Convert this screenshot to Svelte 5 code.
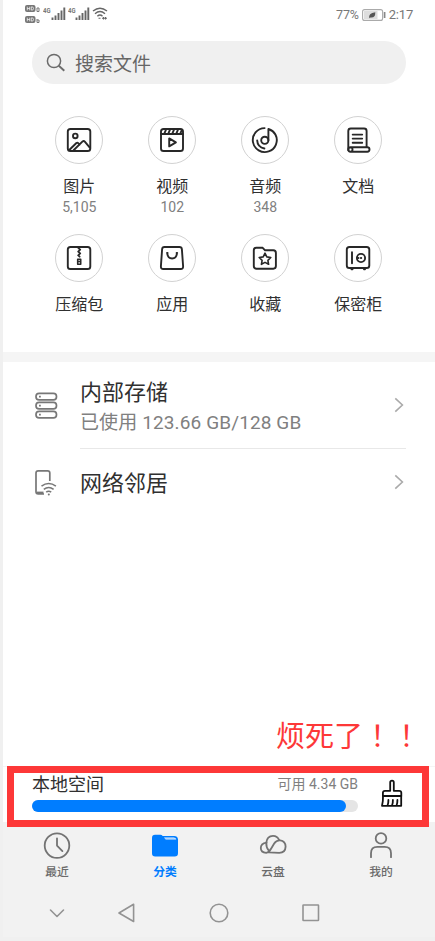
<script>
  // State
  let used = 96.2;

  const categories = [
    { icon: "image", name: "图片", count: "5,105" },
    { icon: "video", name: "视频", count: "102" },
    { icon: "audio", name: "音频", count: "348" },
    { icon: "doc", name: "文档" },
    { icon: "zip", name: "压缩包" },
    { icon: "app", name: "应用" },
    { icon: "star", name: "收藏" },
    { icon: "safe", name: "保密柜" }
  ];

  const tabs = [
    { icon: "recent", name: "最近" },
    { icon: "folder", name: "分类", active: true },
    { icon: "cloud", name: "云盘" },
    { icon: "me", name: "我的" }
  ];
</script>

<div class="screen">
  <header class="status">
    <div class="hd">
      <svg width="17" height="20" viewBox="0 0 17 20">
        <g fill="#777">
          <rect x="0" y="1" width="10.5" height="7" rx="2" />
          <rect x="0" y="12" width="10.5" height="7" rx="2" />
        </g>
        <g fill="none" stroke="#fff" stroke-width="0.7">
          <path d="M2.3 2.7v3.6M4.7 2.7v3.6M2.3 4.5h2.4M6.3 2.9h.8q1.4 0 1.4 1.6t-1.4 1.6h-.8z" />
          <path d="M2.3 13.7v3.6M4.7 13.7v3.6M2.3 15.5h2.4M6.3 13.9h.8q1.4 0 1.4 1.6t-1.4 1.6h-.8z" />
        </g>
        <g fill="none" stroke="#777" stroke-width="1">
          <path d="M12 4h2v3.5h-2zM12 15v3.5h2V16h-2" />
        </g>
      </svg>
    </div>
    {#each [0, 1] as sim}
      <div class="signal">
        <span>4G</span>
        <svg width="15" height="13" viewBox="0 0 15 13">
          <path d="M1.5 10.5V13M4.5 8.5V13M7.5 6V13M10.5 3.5V13M13.3 0.5V13" stroke="#666" stroke-width="1.9" />
        </svg>
      </div>
    {/each}
    <svg class="wifi" width="16" height="13" viewBox="0 0 16 13" fill="none" stroke="#666" stroke-width="1.4">
      <path d="M1 4Q8-1.5 15 4M3 6.7Q8 2.5 13 6.7M5.4 9.2Q8 6.8 10.5 9.2" />
      <path d="M6.5 11.3h2M10 11.3h5M11.5 10v2.5M13.5 10v2.5" stroke-width="1.1" />
    </svg>
    <div class="power">
      <span class="percent">77%</span>
      <svg width="24" height="12" viewBox="0 0 24 12">
        <rect x="0.6" y="0.6" width="20" height="10.8" rx="2" fill="#fff" stroke="#aaa" stroke-width="1.1" />
        <rect x="2" y="2" width="13.5" height="8" fill="#ddd" />
        <path d="M7.3 9.3Q6 4 13.3 3.2Q13.5 9 8.5 8.4Z" fill="#555" />
        <path d="M22.6 3v6" stroke="#888" stroke-width="1.7" />
      </svg>
      <span class="time">2:17</span>
    </div>
  </header>

  <div class="search">
    <svg width="20" height="20" viewBox="0 0 20 20" fill="none" stroke="#6b6b6b" stroke-width="1.5">
      <circle cx="8" cy="8" r="6.6" />
      <path d="M12.8 12.8l5.5 5" stroke-width="1.9" />
    </svg>
    <span>搜索文件</span>
  </div>

  <div class="categories">
    {#each categories as item}
      <div class="category">
        <div class="circle">
          <svg width="28" height="28" viewBox="0 0 28 28" fill="none" stroke="#282828" stroke-width="1.9" stroke-linejoin="round" stroke-linecap="round">
            {#if item.icon === "image"}
              <rect x="2.8" y="3" width="22.5" height="22" rx="2.6" />
              <circle cx="10.3" cy="9.9" r="2.3" />
              <path d="M4 24.2l7.4-7.2q1-.7 1.8.2l1.3 1.5M8.6 24.2l9-8.8q1.2-1 2.2.2l5 6" />
            {:else if item.icon === "video"}
              <rect x="3" y="3" width="22" height="22" rx="2.6" />
              <path d="M3 8h22M8 3.7L6.3 7.6M12 3.7l-1.7 3.9M16 3.7l-1.7 3.9M20 3.7l-1.7 3.9M23.8 4l-1.5 3.6M11.2 12.4v8l6.7-4z" />
            {:else if item.icon === "audio"}
              <path d="M13.6 2.1A12 12 0 1 0 24.4 8.5Q22.3 4.6 17.4 3V14.2" />
              <circle cx="13.8" cy="14.3" r="3.6" />
              <path d="M6.2 14.5q.3 6.7 7.2 8" />
            {:else if item.icon === "doc"}
              <path d="M4.3 24.2V5q0-2.5 2.5-2.5h13.3q2.5 0 2.5 2.5v16M8.7 8.6h9.5M8.7 12.6h9.5M8.7 16.8h9.5" />
              <path d="M6.5 21.2h16.7q2.3.1 2.3 2.2t-2.3 2.3H6.5q-2.2-.1-2.2-2.3t2.2-2.2q2 .1 2 2.3t-2 2.2" />
            {:else if item.icon === "zip"}
              <rect x="2.8" y="3" width="22.5" height="22" rx="2.6" />
              <path d="M13.2 3.8l2 1.8-2 2 2 1.8-2 2 1.4 1.3" stroke-width="1.8" />
              <path d="M12.7 15.2h3v5h-3zM12.8 17.5h2.8" stroke-width="1.6" />
            {:else if item.icon === "app"}
              <path d="M6.4 3h15q2.3 0 2.5 2.3l1.2 17q.1 2.7-2.4 2.7H5.3q-2.5 0-2.4-2.7l1.2-17Q4.3 3 6.4 3z" />
              <path d="M9.3 9.2q.3 5.3 4.8 5.3t4.8-5.3M9 9h.6M18.6 9h.6" />
            {:else if item.icon === "star"}
              <path d="M5.2 3.8h6.5l2.4 2.5h8.2q2.6 0 2.6 2.6v13.2q0 2.6-2.6 2.6H5.4q-2.6 0-2.6-2.6V6.3q0-2.5 2.4-2.5z" />
              <path d="M14 9.2l1.8 3.7 4 .6-2.9 2.8.7 4-3.6-1.9-3.6 1.9.7-4-2.9-2.8 4-.6z" stroke-width="1.6" />
            {:else}
              <rect x="2.8" y="3" width="22.5" height="21" rx="2.6" />
              <path d="M8 8.2v11M7.5 25.2h1M20 25.2h1" />
              <circle cx="17" cy="14" r="4.1" />
              <path d="M17 14h.1M14.2 14h.2" stroke-width="2.2" />
            {/if}
          </svg>
        </div>
        <span class="name">{item.name}</span>
        {#if item.count}
          <span class="count">{item.count}</span>
        {/if}
      </div>
    {/each}
  </div>

  <div class="band"></div>

  <div class="row storage">
    <svg width="26" height="30" viewBox="0 0 26 30" fill="none" stroke="#777" stroke-width="1.7">
      <rect x="4" y="2.3" width="20.5" height="6.6" rx="3.1" />
      <rect x="4" y="11.3" width="20.5" height="6.6" rx="3.1" />
      <rect x="4" y="20.3" width="20.5" height="6.6" rx="3.1" />
      <path d="M7 5.6h1.8M7 14.6h1.8M7 23.6h1.8" />
    </svg>
    <div class="info">
      <span class="title">内部存储</span>
      <span class="sub">已使用 123.66 GB/128 GB</span>
    </div>
    <svg class="arrow" width="10" height="16" viewBox="0 0 10 16"><path d="M1.3 1.3L8.4 8l-7.1 6.7" /></svg>
  </div>
  <div class="row network">
    <svg width="26" height="30" viewBox="0 0 26 30" fill="none" stroke="#777" stroke-width="1.7">
      <path d="M12 26H6.2Q4 26 4 23.8V5q0-2.2 2.2-2.2h9.4q2.2 0 2.2 2.2v8" />
      <path d="M5 24.8h6.5" stroke-width="2.4" />
      <path d="M9.5 18.2q7.2-5.3 14.4 0M11.8 21.3q4.9-3.7 9.8 0M14.2 24.2q2.5-1.9 5 0" stroke-width="1.6" />
      <circle cx="16.8" cy="26.5" r="1" fill="#777" stroke="none" />
    </svg>
    <div class="info">
      <span class="title">网络邻居</span>
    </div>
    <svg class="arrow" width="10" height="16" viewBox="0 0 10 16"><path d="M1.3 1.3L8.4 8l-7.1 6.7" /></svg>
  </div>

  <div class="space">
    <div class="usage">
      <div class="labels">
        <span class="local">本地空间</span>
        <span class="free">可用 4.34 GB</span>
      </div>
      <div class="track">
        <div class="fill" style="width: {used}%"></div>
      </div>
    </div>
    <svg width="24" height="30" viewBox="0 0 24 30" fill="none" stroke="#111" stroke-width="1.8" stroke-linejoin="round" stroke-linecap="round">
      <path d="M10.2 12.8V4.4q0-1.7 1.8-1.7t1.8 1.7v8.4h5.4q2.1 0 2.1 2V18H2.900v-3.2q0-2 2.1-2z" />
      <path d="M3 18q.2 5.5-1 9.8h19.2V18M7.5 27.5q1-2.6.9-5.5M12 27.5q1-2.6.9-5.5M16.5 27.5q1-2.6.9-5.5" />
    </svg>
  </div>

  <nav class="tabs">
    {#each tabs as tab}
      <div class="tab" class:active={tab.active}>
        <svg width="30" height="30" viewBox="0 0 30 30" fill="none" stroke="#737373" stroke-width="1.8" stroke-linecap="round" stroke-linejoin="round">
          {#if tab.icon === "recent"}
            <circle cx="15" cy="14.6" r="12.3" />
            <path d="M15 7.3v7.3l5.4 5.5" />
          {:else if tab.icon === "folder"}
            <path d="M5 3.8h5.4q1.3 0 2.3 1.2h11.5q3.3 0 3.8 3.3v13.9q0 3.3-3.3 3.3H5.2Q2 25.5 2 22.2V6.9q0-3.1 3-3.1z" fill="#007dff" stroke="none" />
            <path d="M14 6.5l1.7 2h10.6q-.6-2-2.6-2z" fill="#e9f2fd" stroke="none" />
            <path d="M15.3 7.5h9" stroke="#8cc4ff" stroke-width="0.6" />
          {:else if tab.icon === "cloud"}
            <path d="M8.3 11.7Q9 4.8 15 4.8q4.4 0 6.2 4.2" />
            <path d="M8.5 11.7Q2.8 12.5 2.8 17.1T8.2 21.8q2.8-.3 5-4.3l3-5q2.2-3.5 6-3.1 5.3.8 5.4 6.2-.2 6.1-6.4 6.2L11 21.3" />
            <path d="M8.3 11.7q-.3 4.4 2.4 7.8" />
          {:else}
            <circle cx="15" cy="7.4" r="5.3" />
            <path d="M5 26.2v-4q0-6.3 6.3-6.3h7.4q6.3 0 6.3 6.3v4" />
          {/if}
        </svg>
        <span>{tab.name}</span>
      </div>
    {/each}
  </nav>

  <div class="system">
    <svg width="350" height="24" viewBox="0 0 350 24" fill="none" stroke="#939393" stroke-width="1.6" stroke-linejoin="round" stroke-linecap="round">
      <path d="M47.5 9l6.5 6.5L60.5 9M130.6 3.3L116 12l14.6 8.5z" />
      <circle cx="216" cy="12" r="8.8" />
      <rect x="300" y="4" width="15.5" height="15.5" rx="0.5" />
    </svg>
  </div>

  <p class="complaint">烦死了！！</p>
  <div class="highlight"></div>
</div>

<style>
  :global(body) {
    background: #f0f0f0;
  }

  .screen {
    position: relative;
    display: flex;
    flex-direction: column;
    box-sizing: border-box;
    height: 937px;
    margin-left: 3px;
    overflow: hidden;
    background: #fff;
    color: #303030;
    font-family: Roboto, "Noto Sans CJK SC", sans-serif;
  }

  svg {
    display: block;
    flex: none;
  }

  .status {
    display: flex;
    align-items: flex-start;
    box-sizing: border-box;
    height: 37px;
    padding: 4px 22px 0;
    color: #777;
  }

  .hd {
    width: 18px;
  }

  .signal {
    display: flex;
    align-items: flex-start;
    width: 24.5px;
  }

  .signal span {
    width: 7.5px;
    margin-top: 3px;
    font-size: 8px;
    font-weight: 700;
    line-height: 8px;
    transform: scaleX(0.75);
    transform-origin: left;
  }

  .signal svg {
    margin-top: 3px;
  }

  .wifi {
    margin-top: 3px;
  }

  .power {
    display: flex;
    align-items: center;
    gap: 3px;
    height: 21px;
    margin-left: auto;
    font-size: 13px;
    letter-spacing: -0.2px;
  }

  .percent {
    font-size: 12.5px;
  }

  .search {
    display: flex;
    align-items: center;
    box-sizing: border-box;
    height: 43px;
    margin: 4px 29px 0;
    padding-left: 14px;
    border-radius: 22px;
    background: #f0f0f0;
    color: #666;
    font-size: 19px;
  }

  .search span {
    margin-left: 9px;
  }

  .categories {
    display: grid;
    grid-template-columns: repeat(4, 93px);
    grid-auto-rows: 118px;
    height: 236.5px;
    margin-top: 31.5px;
    margin-left: 29.8px;
  }

  .category {
    display: flex;
    flex-direction: column;
    align-items: center;
  }

  .circle {
    display: flex;
    align-items: center;
    justify-content: center;
    box-sizing: border-box;
    width: 48px;
    height: 48px;
    border: 1px solid #d2d2d2;
    border-radius: 50%;
  }

  .name {
    margin-top: 13px;
    font-size: 16px;
    line-height: 20px;
  }

  .count {
    color: #808080;
    font-size: 14px;
    line-height: 20px;
  }

  .band {
    height: 10px;
    background: #f5f5f5;
  }

  .row {
    display: flex;
    align-items: center;
    margin: 0 29px;
  }

  .row .info {
    display: flex;
    flex: 1;
    flex-direction: column;
    justify-content: center;
    box-sizing: border-box;
    height: 100%;
    margin-left: 22px;
  }

  .storage {
    height: 87px;
  }

  .storage .info {
    margin-right: -12px;
    padding-top: 4px;
    border-bottom: 1px solid #e8e8e8;
  }

  .network {
    height: 67px;
  }

  .network .info {
    padding-top: 3px;
  }

  .title {
    font-size: 22px;
    line-height: 30px;
  }

  .sub {
    color: #808080;
    font-size: 19px;
    line-height: 29px;
    letter-spacing: 0.12px;
  }

  .arrow {
    margin-right: 2px;
    margin-bottom: 1px;
    fill: none;
    stroke: #aaa;
    stroke-width: 1.6;
  }

  .space {
    display: flex;
    align-items: flex-start;
    box-sizing: border-box;
    height: 56px;
    margin-top: auto;
    padding: 5px 29px 0;
    border-top: 1px solid #f5f5f5;
  }

  .usage {
    width: 326px;
    margin-right: 22px;
  }

  .space svg {
    margin-top: 6px;
  }

  .labels {
    display: flex;
    align-items: center;
    justify-content: space-between;
    height: 22px;
    margin-bottom: 6px;
  }

  .local {
    font-size: 18px;
  }

  .free {
    margin-top: -1px;
    color: #808080;
    font-size: 14px;
  }

  .track {
    height: 12px;
    border-radius: 6px;
    background: #e5e5e5;
  }

  .fill {
    height: 100%;
    border-radius: 6px;
    background: #007dff;
  }

  .tabs {
    display: flex;
    height: 66px;
    background: #f2f2f2;
  }

  .tab {
    display: flex;
    flex: 1;
    flex-direction: column;
    align-items: center;
    padding-top: 9px;
    color: #6b6b6b;
    font-size: 11.8px;
    font-weight: 500;
    line-height: 18px;
  }

  .tab span {
    margin-top: 2px;
  }

  .tab.active {
    color: #007dff;
    font-weight: 700;
  }

  .system {
    height: 49px;
    background: #f2f2f2;
  }

  .system svg {
    margin-top: 13px;
  }

  .complaint {
    position: absolute;
    top: 714px;
    left: 273px;
    margin: 0;
    color: #fd3838;
    font-family: "Noto Sans CJK TC", sans-serif;
    font-size: 29px;
    line-height: 40px;
    white-space: nowrap;
  }

  .highlight {
    position: absolute;
    top: 766px;
    left: 4px;
    box-sizing: border-box;
    width: 422px;
    height: 61px;
    border: 7px solid #fd3838;
  }
</style>
